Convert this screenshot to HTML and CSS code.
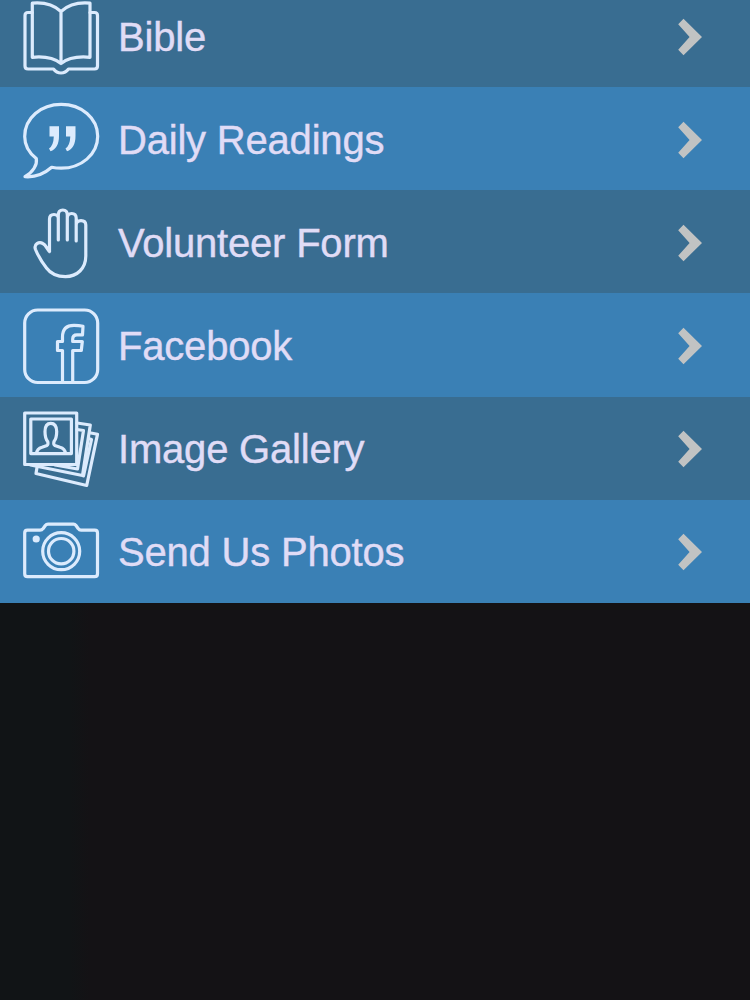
FILE: index.html
```html
<!DOCTYPE html>
<html lang="en">
<head>
    <meta charset="UTF-8">
    <meta name="viewport" content="width=device-width, initial-scale=1.0">
    <title>Menu</title>
    <link rel="stylesheet" href="styles.css">
</head>
<body>
    <svg class="defs" width="0" height="0">
        <symbol id="chevron" viewBox="0 0 24 38">
            <path d="M5.500 .8 24 19 5.500 37.200 .2 31.800 11.600 19 .2 6.200Z"/>
        </symbol>
    </svg>

    <nav class="menu">
        <a class="menu-item" href="#">
            <svg class="icon" viewBox="0 1 80 80">
                <path d="M11.3 7.2Q29 5.500 40 15.500Q51 5.500 69 7.200V61.300Q50 59.500 40 67.500Q30 59.500 11.300 61.300ZM40 15.500V67.500"/>
                <path d="M11.300 16.500H7Q4 16.500 4 19.500V70Q4 73 7 73H32.500Q35.500 77 40 77T47.500 73H73.500Q76.500 73 76.500 70V19.500Q76.500 16.500 73.500 16.500H69"/>
            </svg>
            <span class="label">Bible</span>
            <svg class="arrow"><use href="#chevron"/></svg>
        </a>
        <a class="menu-item" href="#">
            <svg class="icon" viewBox="0 0 80 80">
                <path d="M15.300 58.500C7.500 52.500 3.700 45 3.700 36.500C3.700 18 20 4.400 40.200 4.400S76.700 18 76.700 36.300S60 68.200 40.200 68.200Q35 68.200 30.700 67.300C23 74 14 77.500 4 76.700C12 72 16.500 65 15.300 58.500Z"/>
                <path class="solid" d="M28.500 26.200H38V36C38 44 35 49.500 29.500 51.200L28 48.500Q32.500 45.500 32.800 36.500H28.500ZM45 26.200H54.500V36C54.500 44 51.500 49.500 46 51.200L44.500 48.500Q49 45.500 49.300 36.500H45Z"/>
            </svg>
            <span class="label">Daily Readings</span>
            <svg class="arrow"><use href="#chevron"/></svg>
        </a>
        <a class="menu-item" href="#">
            <svg class="icon" viewBox="0 0 80 80">
                <path d="M28.500 48.500V16Q28.500 11.500 33 11.500T37.300 16V37V12Q37.300 7 41.800 7T46.300 12V37V15Q46.300 10.500 50.700 10.500T55.200 15V38V22Q55.200 17.600 60 17.600T64.800 22V53C64.800 65.500 56 73.600 44.500 73.600C35.500 73.600 29.500 70.500 25.500 65C20 58 17 52.500 14.500 46.500C12.500 41 18 38.500 21.800 40.500C25 42 26 46 28.500 48.500"/>
            </svg>
            <span class="label">Volunteer Form</span>
            <svg class="arrow"><use href="#chevron"/></svg>
        </a>
        <a class="menu-item" href="#">
            <svg class="icon" viewBox="0 0 80 80">
                <rect x="3.700" y="4" width="73" height="72.500" rx="13"/>
                <path d="M41.500 76V44.500H36.500V35.500H41.500V31C41.500 23 46 19.300 53 19.300Q58 19.300 62 20.300L61.500 28.800H56Q51.700 28.800 51.700 33V35.500H61.300L60.300 44.500H51.700V76"/>
            </svg>
            <span class="label">Facebook</span>
            <svg class="arrow"><use href="#chevron"/></svg>
        </a>
        <a class="menu-item" href="#">
            <svg class="icon" viewBox="0 0 80 80">
                <rect x="3.700" y="4" width="52" height="51.500"/>
                <rect x="9.800" y="10" width="40.600" height="34.600"/>
                <path d="M15.500 44.500Q16 39.500 21 38.200L26 36.500Q27.500 35.500 26.700 32.500C24.500 30 24 26 24 22.500Q24 14.300 29.800 14.300T35.700 22.500C35.700 26 35 30 33 32.500Q32.200 35.500 33.800 36.500L39 38.200Q44 39.500 44.500 44.500"/>
                <path d="M56 14 69.300 16 61.500 66.500 9.500 56M56 20.500 62.500 21.500 56.500 60 34 56"/>
                <path d="M68.500 23.800 76.500 25.300 65.700 76.500 15 64.500 16 58.500M67.500 29.500 70.500 30.500 62.500 67"/>
            </svg>
            <span class="label">Image Gallery</span>
            <svg class="arrow"><use href="#chevron"/></svg>
        </a>
        <a class="menu-item" href="#">
            <svg class="icon" viewBox="0 -.7 80 80">
                <path d="M6.500 17.500H19Q21 17.500 22 16L24.300 12.800Q25.300 11.500 27 11.500H52.500Q54 11.500 55 12.800L57.300 16Q58.300 17.500 60 17.500H73.700Q76.500 17.500 76.500 20.300V61Q76.500 64 73.700 64H6.500Q3.700 64 3.700 61V20.300Q3.700 17.500 6.500 17.500Z"/>
                <circle cx="40.200" cy="38.500" r="18.500"/>
                <circle cx="40.200" cy="38.500" r="12.700"/>
                <circle class="solid" cx="15.200" cy="26.300" r="3.600"/>
            </svg>
            <span class="label">Send Us Photos</span>
            <svg class="arrow"><use href="#chevron"/></svg>
        </a>
    </nav>
</body>
</html>
```
FILE: styles.css
```css
:root {
    --row-dark: #396d91;
    --row-light: #3a80b5;
    --icon-color: #dcebfd;
    --text-color: #e0dcf6;
    --arrow-color: #c1c3c3;
}

body {
    margin: 0;
    min-height: 100vh;
    overflow: hidden;
    background: linear-gradient(90deg, #111416 0, #111416 70px, #141215 90px);
    font-family: "Liberation Sans", Arial, sans-serif;
}

.defs {
    position: absolute;
}

/* The list is scrolled up slightly under the top edge */
.menu {
    margin-top: -16px;
}

.menu-item {
    display: flex;
    align-items: center;
    height: 103.15px;
    padding: 2px 48px 0 21px;
    box-sizing: border-box;
    background-color: var(--row-light);
    color: var(--text-color);
    text-decoration: none;
}

.menu-item:nth-child(odd) {
    background-color: var(--row-dark);
}

.icon {
    width: 80px;
    height: 80px;
    flex: none;
    fill: none;
    stroke: var(--icon-color);
    stroke-width: 3.2;
    stroke-linejoin: round;
    stroke-linecap: round;
}

.icon .solid {
    fill: var(--icon-color);
    stroke: none;
}

.label {
    flex: 1;
    margin-left: 17px;
    font-size: 40px;
    line-height: 46px;
    letter-spacing: -0.2px;
    white-space: nowrap;
    -webkit-text-stroke: 0.4px var(--text-color);
}

.arrow {
    width: 24px;
    height: 38px;
    flex: none;
    fill: var(--arrow-color);
}
```
